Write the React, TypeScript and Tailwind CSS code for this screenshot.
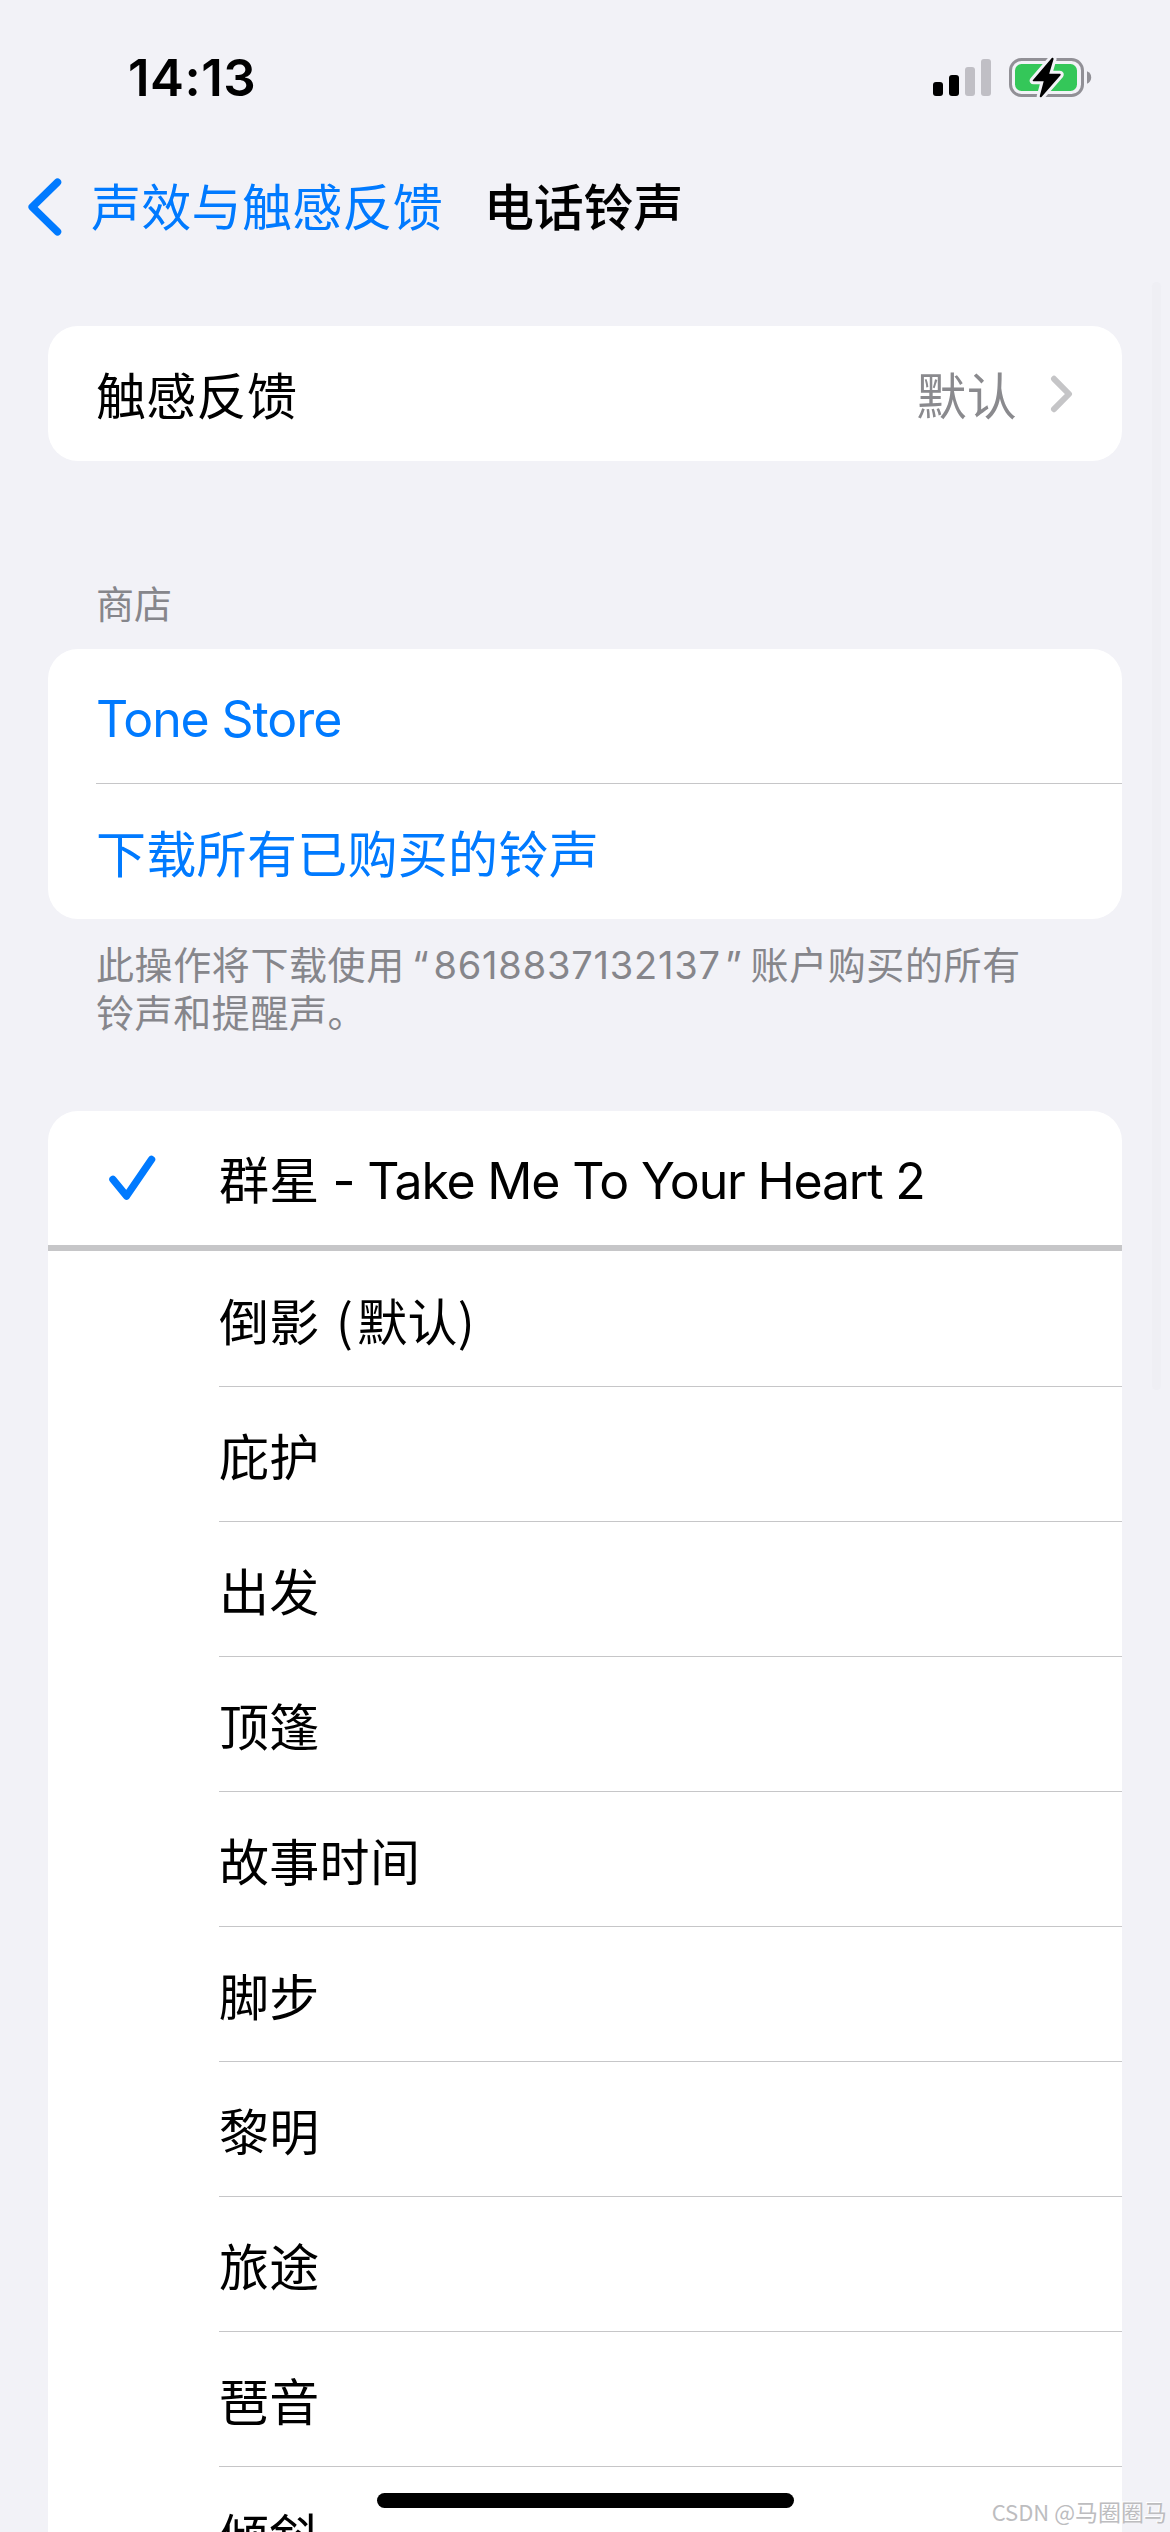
import React from 'react';

interface Ringtone {
  id: number;
  name: string;
}

const ringtones: Ringtone[] = [
  { id: 1, name: '庇护' },
  { id: 2, name: '出发' },
  { id: 3, name: '顶篷' },
  { id: 4, name: '故事时间' },
  { id: 5, name: '脚步' },
  { id: 6, name: '黎明' },
  { id: 7, name: '旅途' },
  { id: 8, name: '琶音' },
  { id: 9, name: '倾斜' },
];

const SignalIcon: React.FC = () => (
  <svg width="58" height="37" viewBox="0 0 58 37">
    <rect x="0" y="23" width="10" height="14" rx="3" fill="#000" />
    <rect x="16" y="16" width="10" height="21" rx="3" fill="#000" />
    <rect x="32" y="8" width="10" height="29" rx="3" fill="#c0bfc5" />
    <rect x="48" y="0" width="10" height="37" rx="3" fill="#c0bfc5" />
  </svg>
);

const BatteryIcon: React.FC = () => (
  <svg width="84" height="43" viewBox="0 0 84 43">
    <rect x="1.5" y="3.5" width="72" height="36" rx="11" fill="none" stroke="#919096" strokeWidth="3" />
    <rect x="6" y="8" width="62" height="27" rx="6.5" fill="#34c759" />
    <path d="M78 15.3c2.600 1 4.200 3.200 4.200 6.200s-1.600 5.200-4.200 6.200z" fill="#919096" />
    <path
      d="M43 1.800L23.800 24.200Q23.200 25.300 24.600 25.300H34.700L30.700 40.200Q31 42 32.500 41L51.500 19.200Q52.200 17.800 50.800 17.800H40.200L44.600 3Q44.400 1.200 43 1.800Z"
      fill="#000"
      stroke="#f2f2f7"
      strokeWidth="6"
      strokeLinejoin="round"
      paintOrder="stroke"
    />
  </svg>
);

const StatusBar: React.FC = () => (
  <div className="flex h-[141px] items-start justify-between pl-[128px] pr-[77px] pt-[46px]">
    <span className="text-[51px] font-semibold leading-[64px] tracking-[0.5px]">14:13</span>
    <div className="flex items-end gap-[18px] pt-[10px]">
      <div className="pb-[3px]">
        <SignalIcon />
      </div>
      <BatteryIcon />
    </div>
  </div>
);

const NavBar: React.FC = () => (
  <div className="flex h-[132px] items-center pl-[27px] leading-[60px]">
    <svg width="36" height="60" viewBox="0 0 36 60" fill="none">
      <path d="M30.500 5.200L5.200 30L30.500 54.800" stroke="#007aff" strokeWidth="7.500" strokeLinecap="round" strokeLinejoin="round" />
    </svg>
    <span className="ml-[28px] pt-[2px] text-[#007aff]">声效与触感反馈</span>
    <span className="ml-[41px] pt-[2px] font-medium tracking-[-0.3px]">电话铃声</span>
  </div>
);

const App: React.FC = () => {
  return (
    <div className="relative h-[2532px] w-[1170px] overflow-hidden bg-[#f2f2f7] font-['Inter','Noto_Sans_CJK_SC',sans-serif] text-[50px] tracking-[0.3px] text-black">
      <StatusBar />
      <NavBar />

      <main className="px-[48px] pt-[53px]">
        <div className="flex h-[135px] items-center rounded-[30px] bg-white pl-[48px] pr-[48px] leading-[60px]">
          <span className="flex-1 pt-[6px]">触感反馈</span>
          <span className="pt-[6px] text-[#8a8a8e]">默认</span>
          <svg className="ml-[33px]" width="24" height="40" viewBox="0 0 24 40" fill="none">
            <path d="M4 4.800L19 20L4 35.200" stroke="#c5c5c7" strokeWidth="6" strokeLinecap="round" strokeLinejoin="round" />
          </svg>
        </div>

        <h2 className="mt-[119px] h-[69px] pl-[48px] text-[38px] leading-[48px] tracking-normal text-[#86868b]">商店</h2>

        <div className="rounded-[30px] bg-white pl-[48px] text-[#007aff]">
          <div className="flex h-[135px] items-center border-b border-[#c6c6c8] pt-[6px] tracking-[-1.1px]">Tone Store</div>
          <div className="flex h-[135px] items-center pt-[8px]">下载所有已购买的铃声</div>
        </div>
        <div className="h-[192px] px-[48px] pt-[22px] text-[38px] leading-[48px] tracking-[0.6px] text-[#86868b]">
          <p className="whitespace-nowrap">
            此操作将下载使用 <span className="-ml-[4px]">“</span>
            <span className="mx-[4px] tracking-[0.8px]">8618837132137</span>” <span className="-ml-[3px]">账户购买的所有</span>
          </p>
          <p>铃声和提醒声。</p>
        </div>

        <div className="rounded-t-[30px] bg-white">
          <div className="flex h-[140px] items-center border-b-[6px] border-[#c6c6c8]">
            <svg className="ml-[60px]" width="48" height="48" viewBox="0 0 48 48" fill="none">
              <path d="M5 25.500L18.500 42L43.500 5.500" stroke="#007aff" strokeWidth="7.500" strokeLinecap="round" strokeLinejoin="round" />
            </svg>
            <span className="ml-[63px] pt-[6px]">
              群星<span className="tracking-[-1.2px]"> - Take Me To Your Heart 2</span>
            </span>
          </div>
          <div className="ml-[171px] flex h-[136px] items-center border-b border-[#c6c6c8] pt-[6px]">
            <span className="whitespace-pre">
              倒影 <span className="ml-[2px] font-['Noto_Sans_CJK_SC']">(<span className="ml-[4px]">默认</span>)</span>
            </span>
          </div>
          {ringtones.map((tone) => (
            <div key={tone.id} className="ml-[171px] flex h-[135px] items-center border-b border-[#c6c6c8] pt-[8px]">
              {tone.name}
            </div>
          ))}
        </div>
      </main>

      {/* scroll indicator */}
      <div className="absolute right-[9px] top-[282px] h-[1108px] w-[9px] rounded-full bg-[#efeff4]" />
      {/* home indicator */}
      <div className="absolute left-[377px] top-[2493px] h-[15px] w-[417px] rounded-full bg-black" />
      <div className="absolute right-[3px] top-[2496px] font-['Noto_Sans_CJK_SC',sans-serif] text-[22px] leading-[30px] tracking-normal text-[#bdbdbf] [text-shadow:-1px_-1px_0_#fff]">
        CSDN @<span className="text-[23px]">马圈圈马</span>
      </div>
    </div>
  );
};

export default App;
